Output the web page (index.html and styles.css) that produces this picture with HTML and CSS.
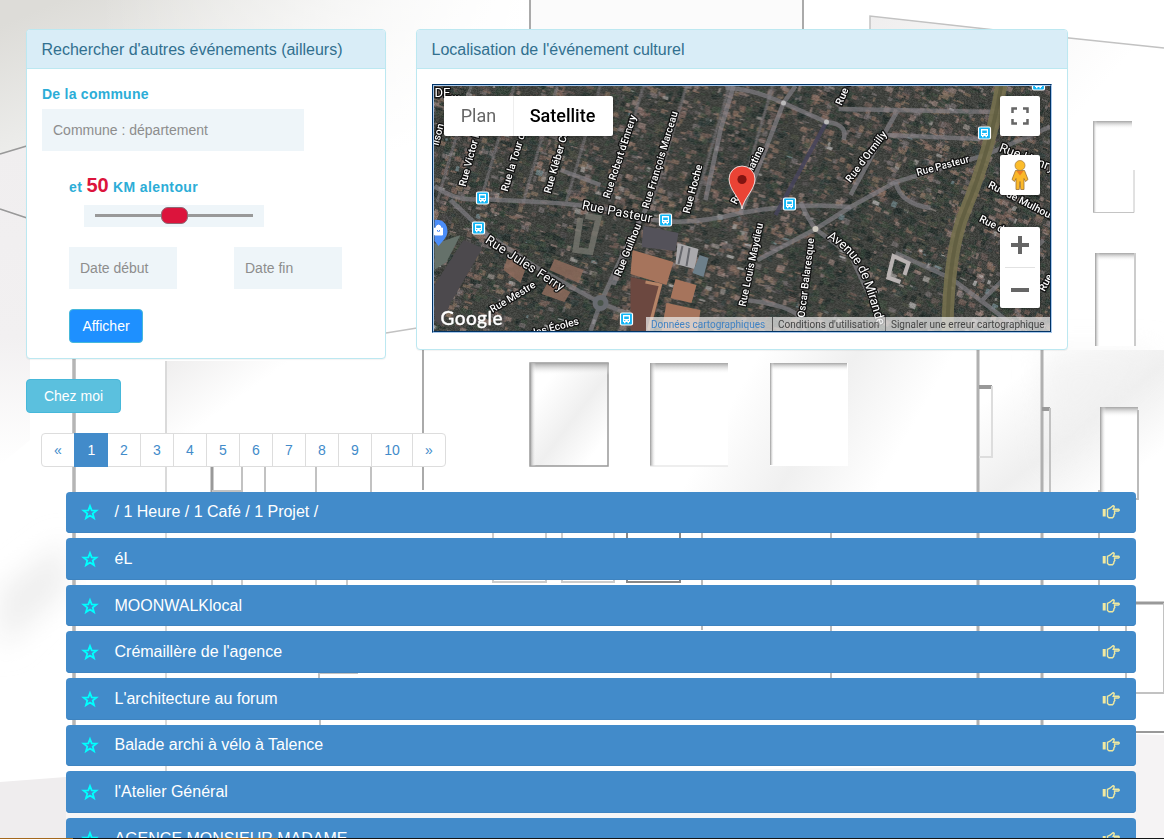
FILE: index.html
```html
<!DOCTYPE html>
<html lang="fr">
<head>
<meta charset="utf-8">
<title>Événements culturels</title>
<link rel="stylesheet" href="styles.css">
</head>
<body>
<svg class="backdrop" viewBox="0 0 1164 839" aria-hidden="true">
  <defs>
    <linearGradient id="corner" gradientUnits="userSpaceOnUse" x1="60" y1="0" x2="200" y2="330"><stop offset="0" stop-color="#dddcd8"/><stop offset=".3" stop-color="#ebebe9"/><stop offset=".75" stop-color="#fff"/></linearGradient>
    <linearGradient id="topFade" gradientUnits="userSpaceOnUse" x1="100" y1="0" x2="530" y2="0"><stop offset="0" stop-color="#fff" stop-opacity="0"/><stop offset="1" stop-color="#fff"/></linearGradient>
    <linearGradient id="sheen" x1="0" y1="0" x2="1" y2="1"><stop offset="0" stop-color="#efeeee"/><stop offset=".5" stop-color="#fff"/></linearGradient>
    <linearGradient id="band" x1="0" y1="0" x2="1" y2="1"><stop offset=".2" stop-color="#fff"/><stop offset=".55" stop-color="#efefef"/><stop offset=".85" stop-color="#fff"/></linearGradient>
    <linearGradient id="wide" gradientUnits="userSpaceOnUse" x1="750" y1="370" x2="960" y2="490"><stop offset="0" stop-color="#fff"/><stop offset=".35" stop-color="#f0f0f0"/><stop offset=".7" stop-color="#fff"/></linearGradient>
    <linearGradient id="sideFade" x1="0" y1="0" x2="0" y2="1"><stop offset="0" stop-color="#f0eeef"/><stop offset=".6" stop-color="#f2f0f1"/><stop offset="1" stop-color="#fff"/></linearGradient>
    <linearGradient id="topShade" x1="0" y1="0" x2="0" y2="1"><stop offset="0" stop-color="#a5a5a5"/><stop offset="1" stop-color="#fff" stop-opacity="0"/></linearGradient>
    <linearGradient id="leftShade"><stop offset="0" stop-color="#999"/><stop offset="1" stop-color="#fff" stop-opacity="0"/></linearGradient>
    <filter id="soft"><feGaussianBlur stdDeviation=".6"/></filter>
    <filter id="haze" x="-30%" y="-30%" width="160%" height="160%"><feGaussianBlur stdDeviation="14"/></filter>
  </defs>
  <rect width="1164" height="839" fill="#fff"/>
  <path d="M0 0H530V160H30L0 154Z" fill="url(#corner)"/>
  <path d="M0 0H530V160H0Z" fill="url(#topFade)"/>
  <path d="M0 154L30 145V440L0 465Z" fill="url(#sideFade)"/>
  <path d="M530 0H803V30H530Z" fill="#fbfbfb"/>
  <path d="M870 16L1164 48V350H1060V30H870Z" fill="url(#sheen)"/>
  <path d="M167 361H290Q250 400 215 425Q190 445 167 450Z" fill="url(#sheen)"/>
  <rect x="640" y="350" width="338" height="142" fill="url(#wide)"/>
  <rect x="978" y="350" width="186" height="142" fill="url(#band)"/>
  <path d="M1040 350L1164 350V345L1050 470Z" fill="#f1f1f1" filter="url(#haze)" opacity=".6"/>
  <path d="M0 782L66 777V839H0Z" fill="#efedee"/>
  <path d="M0 590Q40 560 66 540V590L0 650Z" fill="#efefef" filter="url(#haze)"/>
  <path d="M1130 734L1164 735V839H1130Z" fill="#f5f3f4"/>
  <path d="M66 777L1136 765V839H66Z" fill="#f7f6f6"/>
  <g fill="none" stroke="#c2c2c2" stroke-width="2" filter="url(#soft)">
    <path d="M0 154L30 145M0 209L30 219" stroke="#999" stroke-width="1.5"/>
    <path d="M530 0V30M803 0V30" stroke="#aaa"/>
    <path d="M870 30V16L1050 36L1164 48M386 333L417 328" stroke-width="1.5"/>
    <path d="M74 359V765" stroke="#b5b5b5" stroke-width="3.5"/>
    <path d="M166 361V780" stroke="#dadada"/>
    <path d="M423 350V490" stroke="#aaa"/>
    <path d="M212 467V492" stroke="#999" stroke-width="3"/>
    <path d="M242 467V491H212M265 467V492M316 467V492M371 467V492"/>
    <path d="M212 540V588H242V540M316 540V586H347V540M493 530V582H546V530M562 530V582H614V530" stroke="#ccc"/>
    <path d="M627 530V582H680V530" stroke="#888"/>
    <path d="M702 530V630M831 530V680" stroke="#bbb"/>
    <path d="M978 350V725M1042 350V725" stroke="#b0b0b0" stroke-width="3"/>
    <path d="M1099 490V640" stroke="#bbb"/>
    <path d="M979 387H992" stroke="#999" stroke-width="4"/><path d="M992 386V457H979" stroke="#ddd"/>
    <path d="M1042 409H1050" stroke="#999" stroke-width="4"/><path d="M1050 408V500"/>
    <path d="M1136 603H1164" stroke="#999" stroke-width="3"/><path d="M1136 693H1164M1126 600V690M1164 603V693"/>
    <path d="M1136 732H1164" stroke="#999"/>
    <path d="M319 720V673H358M320 720V765"/>
  </g>
  <g class="windows">
    <g><rect x="530" y="363" width="78" height="103" fill="url(#band)" stroke="#999" stroke-width="1.5"/><rect x="530" y="363" width="79" height="12" fill="url(#topShade)"/><rect x="530" y="363" width="6" height="103" fill="url(#leftShade)"/></g>
    <g><rect x="650" y="363" width="78" height="103" fill="#fff"/><rect x="650" y="363" width="78" height="11" fill="url(#topShade)"/><rect x="650" y="363" width="6" height="103" fill="url(#leftShade)"/><path d="M650 466H728" stroke="#ddd"/></g>
    <g><rect x="770" y="363" width="78" height="103" fill="#fff"/><rect x="770" y="363" width="77" height="8" fill="url(#topShade)"/><rect x="770" y="363" width="4" height="102" fill="url(#leftShade)"/></g>
    <g><rect x="1093" y="121" width="40" height="91" fill="#fff"/><rect x="1094" y="121" width="38" height="8" fill="url(#topShade)"/><rect x="1093" y="121" width="4" height="91" fill="url(#leftShade)"/><path d="M1093 212.500H1134V170" fill="none" stroke="#c4c4c4"/></g>
    <g><rect x="1095" y="253" width="40" height="93" fill="#fff"/><rect x="1095" y="253" width="40" height="8" fill="url(#topShade)"/><rect x="1095" y="253" width="5" height="93" fill="url(#leftShade)"/><path d="M1135 253V346" stroke="#ccc" stroke-width="2"/></g>
    <g><rect x="1100" y="407" width="38" height="92" fill="#fff"/><rect x="1100" y="407" width="38" height="10" fill="url(#topShade)"/><rect x="1100" y="407" width="6" height="92" fill="url(#leftShade)"/><path d="M1138 410V499H1100" fill="none" stroke="#bbb" stroke-width="2"/></g>
  </g>
</svg>

<main class="page">
  <div class="top">
    <section class="panel search">
      <h3 class="panel-title">Rechercher d'autres événements (ailleurs)</h3>
      <form class="panel-body">
        <label class="lbl">De la commune</label>
        <input class="field town" placeholder="Commune : département">
        <div class="radius">
          <div class="lbl distance">et <span class="km">50</span> KM alentour</div>
          <div class="slider"><span class="track"><span class="thumb"></span></span></div>
          <div class="dates">
            <input class="field date" placeholder="Date début">
            <input class="field date" placeholder="Date fin">
          </div>
          <button class="btn show" type="button">Afficher</button>
        </div>
      </form>
    </section>

    <section class="panel place">
      <h3 class="panel-title">Localisation de l'événement culturel</h3>
      <div class="panel-body">
        <div class="map"><div class="map-in">
          <canvas id="ground" width="615" height="245"></canvas>
          <svg class="map-svg" viewBox="434 86 615 245">
            <defs>
              <g id="bus"><rect x="-6" y="-6" width="12" height="12" rx="1.500" fill="#12b5f5" stroke="#fff" stroke-width="1.200"/><path d="M-3.500-4h7v7h-1v1.200h-1.500V3h-2v1.200h-1.500V3h-1z" fill="#fff"/><path d="M-2.300-2.500h4.600v2.500h-4.600zM-2.300 1h1v1h-1zM1.300 1h1v1h-1z" fill="#12b5f5"/></g>
            </defs>
            <g class="roads">
              <path d="M434 186Q455 202 480 199L520 201Q600 204 640 217Q680 228 740 213Q800 202 850 207L895 182L985 155L1049 127"/>
              <path d="M450 200L486 234L540 270L600 303L665 328M600 303L590 331M600 303L622 255L650 200"/>
              <path d="M740 213L757 170L783 103L795 86M725 88Q750 88 783 103L826 122Q848 124 843 140M757 260L815 229L850 207M800 202Q808 220 815 229L850 255L880 320"/>
              <path d="M838 109L1000 112M898 109L880 140L850 195M885 135L980 139M895 182Q900 204 930 208M895 253L950 278L981 301L1043 240M981 301L1020 331M745 300Q790 305 800 318"/>
              <path d="M560 170L600 185M640 217L613 285M705 200L720 130L733 86" stroke-width="3"/>
            </g>
            <path d="M826 122L775 215" stroke="#46445b" stroke-width="4" opacity=".85"/>
            <path d="M1001 84Q990 150 965 210Q948 250 947 331" fill="none" stroke="#77714f" stroke-width="12" opacity=".9"/>
            <path d="M1001 84Q990 150 965 210Q948 250 947 331" fill="none" stroke="#5f5d40" stroke-width="4" opacity=".8"/>
            <path d="M434 244L460 235L446 262L434 270Z" fill="#65716a"/>
            <path d="M463 240L482 248L450 303L441 326L434 320V285Z" fill="#4c494d"/>
            <path d="M643 226L678 233L675 251L641 247Z" fill="#54525a"/>
            <path d="M632 250L673 262L666 285L630 274ZM675 279L696 285L691 303L670 298ZM666 303L700 310L697 331H661Z" fill="#a6745c"/>
            <path d="M677 243L698 249L694 269L675 264Z" fill="#aaa9ac"/><path d="M682 246L678 264M689 248L686 266" stroke="#66676c" stroke-width="2"/>
            <path d="M630 277L662 284L650 331H630Z" fill="#6c4840"/><path d="M645 282L660 285L648 330" fill="none" stroke="#b58467" stroke-width="3"/>
            <path d="M699 255L708 258L703 277L692 273Z" fill="#6d7f8a"/>
            <path d="M888 276L893 256L908 263L904 275M886 277L900 282" fill="none" stroke="#b9b3b2" stroke-width="4"/>
            <path d="M580 218L575 250L590 252L598 218L585 216" fill="none" stroke="#77776f" stroke-width="6" opacity=".8"/>
            <path d="M554 259L583 270L578 283L549 270ZM548 281L570 292L564 302L541 294ZM507 257L526 266L520 283L503 270Z" fill="#8d6b5c" opacity=".85"/>
            <circle cx="600" cy="303" r="8" fill="#686b70"/><circle cx="600" cy="303" r="3" fill="#49544a"/>
            <circle cx="815" cy="229" r="3" fill="#ccc8bd"/><circle cx="783" cy="103" r="2.500" fill="#bbb"/><circle cx="826" cy="122" r="2.500" fill="#bbb"/>

            <g class="names">
              <text class="big thin" x="434" y="97">DE...</text>
              <text transform="translate(438 146) rotate(-76)">ilson</text>
              <text transform="translate(465 187) rotate(-75)">Rue Victor Hugo</text>
              <text transform="translate(507 192) rotate(-73)">Rue la Tour d'Auv.</text>
              <text transform="translate(550 194) rotate(-74)">Rue Kléber Castaing</text>
              <text transform="translate(609 199) rotate(-72)" textLength="87">Rue Robert d'Ennery</text>
              <text transform="translate(648 209) rotate(-73)" textLength="101">Rue François Marceau</text>
              <text transform="translate(689 214) rotate(-75)">Rue Hoche</text>
              <text transform="translate(736 205) rotate(-64)">Rue Lamatina</text>
              <text transform="translate(841 106) rotate(-66)">Rue Gal</text>
              <text transform="translate(850 183) rotate(-53)" textLength="61">Rue d'Ormilly</text>
              <text transform="translate(917 176) rotate(-15)" textLength="54">Rue Pasteur</text>
              <text class="big" transform="translate(998 151) rotate(21)">Rue Henry</text>
              <text transform="translate(987 187) rotate(27)">Rue de Mulhouse</text>
              <text transform="translate(978 221) rotate(27)">Rue de</text>
              <text transform="translate(1044 292) rotate(-62)">Rue</text>
              <text class="big" transform="translate(581 209) rotate(11)" textLength="71">Rue Pasteur</text>
              <text class="big" transform="translate(484 242) rotate(33)" textLength="91">Rue Jules Ferry</text>
              <text transform="translate(492 313) rotate(-31)" textLength="51">Rue Mestre</text>
              <text transform="translate(531 337) rotate(-15)">des Écoles</text>
              <text transform="translate(620 277) rotate(-68)">Rue Guilhou</text>
              <text transform="translate(745 307) rotate(-78)" textLength="85">Rue Louis Maydieu</text>
              <text transform="translate(804 318) rotate(-83)" textLength="80">Oscar Balaresque</text>
              <path id="avenue" d="M826 238Q851 252 861 276Q869 297 879 334" fill="none"/>
              <text class="big"><textPath href="#avenue" textLength="105">Avenue de Mirande</textPath></text>
            </g>
            <use href="#bus" x="482" y="198"/><use href="#bus" x="478" y="228"/><use href="#bus" x="665" y="220"/><use href="#bus" x="789" y="204"/><use href="#bus" x="984" y="133"/><use href="#bus" x="1038" y="84"/><use href="#bus" x="626" y="319"/>
            <path d="M434 220c8-1 13 4 13 11 0 6-4 9-9 15l-4-5z" fill="#4b8df8"/><path d="M434 228h8v7h-8zM436 228v-2q2-2 4 0v2" fill="#fff" stroke="#fff"/><path d="M437 230v1q1 2 2 0v-1" fill="none" stroke="#4b8df8"/>
            <path d="M741.500 209C740 198 728.500 190 728.500 179a13 13 0 0 1 26 0C754.500 190 743 198 741.500 209Z" fill="#ea4335" stroke="#fff" stroke-width=".8"/><circle cx="741.500" cy="179.500" r="4.600" fill="#811411"/>
            <text class="logo" x="440" y="325" textLength="62">Google</text>
          </svg>
          <div class="types"><span>Plan</span><span class="on">Satellite</span></div>
          <div class="tools">
            <div class="tool"><svg width="18" height="18" viewBox="0 0 18 18"><path d="M1.500 6V1.500H6M12 1.500h4.500V6M16.500 12v4.500H12M6 16.500H1.500V12" fill="none" stroke="#666" stroke-width="2.500"/></svg></div>
            <div class="tool peg"><svg width="20" height="32" viewBox="0 0 20 32"><path d="M5.500 11.500h9l3.500 9-2.500 2-1.500-3V30.500H10.800l-.8-8-.8 8H6V19.500l-1.500 3-2.500-2z" fill="#fbb829" stroke="#9c7136" stroke-width=".8"/><path d="M6.500 12h7L10 16.500z" fill="#ef7f22"/><circle cx="10" cy="6.500" r="5" fill="#fbbc2b" stroke="#a2783c" stroke-width=".7"/></svg></div>
            <div class="tool zoomer"><svg width="40" height="81" viewBox="0 0 40 81"><path d="M11 18h18M20 9v18M11 63h18" stroke="#666" stroke-width="4"/><path d="M5 40.500h30" stroke="#e2e2e2"/></svg></div>
          </div>
          <div class="credits"><span class="data">Données cartographiques</span><span class="terms">Conditions d'utilisation</span><span class="report">Signaler une erreur cartographique</span></div>
        </div></div>
      </div>
    </section>
  </div>

  <button class="btn home" type="button">Chez moi</button>

  <nav class="pages"><a>«</a><a class="on">1</a><a>2</a><a>3</a><a>4</a><a>5</a><a>6</a><a>7</a><a>8</a><a>9</a><a class="wide">10</a><a>»</a></nav>

  <svg width="0" height="0" class="defs"><defs>
    <symbol id="star" viewBox="0 0 18 18"><path d="M9 3L10.700 7.400L15.400 7.600L11.700 10.500L13 15.100L9 12.500L5 15.100L6.300 10.500L2.600 7.600L7.300 7.400Z" fill="none" stroke="#0ff" stroke-width="1.800"/></symbol>
    <symbol id="hand" viewBox="0 0 18 14"><path d="M.7 4h3v7.500h-3z" fill="#f0e9a0"/><path d="M5.500 4.300L8 3.200L11 .8Q12.800 1 12 2.500L11.200 4.200H16.500Q18 5.200 16.500 6H12.500V7.500L12.800 8.500L12 9.500L11.700 11.500L10.500 12.800H7L5.500 11.500Z" fill="none" stroke="#f0e9a0" stroke-width="1.400"/></symbol>
  </defs></svg>
  <ul class="events">
    <li><svg class="star"><use href="#star"/></svg><span>/ 1 Heure / 1 Café / 1 Projet /</span><svg class="hand"><use href="#hand"/></svg></li>
    <li><svg class="star"><use href="#star"/></svg><span>éL</span><svg class="hand"><use href="#hand"/></svg></li>
    <li><svg class="star"><use href="#star"/></svg><span>MOONWALKlocal</span><svg class="hand"><use href="#hand"/></svg></li>
    <li><svg class="star"><use href="#star"/></svg><span>Crémaillère de l'agence</span><svg class="hand"><use href="#hand"/></svg></li>
    <li><svg class="star"><use href="#star"/></svg><span>L'architecture au forum</span><svg class="hand"><use href="#hand"/></svg></li>
    <li><svg class="star"><use href="#star"/></svg><span>Balade archi à vélo à Talence</span><svg class="hand"><use href="#hand"/></svg></li>
    <li><svg class="star"><use href="#star"/></svg><span>l'Atelier Général</span><svg class="hand"><use href="#hand"/></svg></li>
    <li><svg class="star"><use href="#star"/></svg><span>AGENCE MONSIEUR MADAME</span><svg class="hand"><use href="#hand"/></svg></li>
  </ul>
</main>
<div class="edge"></div>
<script src="ground.js"></script>
</body>
</html>
```
FILE: styles.css
```css
* { box-sizing: border-box; }
body {
  margin: 0;
  height: 839px;
  overflow: hidden;
  position: relative;
  background: #fff;
  font: 14px/20px "Liberation Sans", Arial, sans-serif;
  color: #333;
}
.backdrop { position: absolute; left: 0; top: 0; width: 1164px; height: 839px; z-index: -1; }
.page { padding: 29px 28px 0 26px; }
.top { display: flex; align-items: flex-start; gap: 30px; }
.panel { background: #fff; border: 1px solid #bce8f1; border-radius: 4px; box-shadow: 0 1px 1px rgba(0,0,0,.05); }
.search { width: 360px; height: 330px; }
.place { width: 652px; height: 321px; flex: none; }
.panel-title {
  margin: 0;
  height: 39px;
  padding: 11px 14.5px 0;
  font-size: 16px;
  font-weight: 400;
  line-height: 18px;
  color: #31708f;
  background: #d9edf7;
  border-bottom: 1px solid #bce8f1;
  border-radius: 3px 3px 0 0;
}
.panel-body { padding: 15px; }
.lbl { display: block; font-weight: 700; letter-spacing: .25px; color: #2cadd7; height: 25px; }
.field {
  display: block;
  height: 42px;
  border: 0;
  padding: 0 11px;
  background: #eef5f9;
  font: inherit;
}
.field::placeholder { color: #8d8d8d; opacity: 1; }
.town { width: 262px; }
.radius { padding: 21px 0 0 27px; }
.distance { height: 33px; line-height: 26px; letter-spacing: .38px; }
.km { font-size: 20px; letter-spacing: 0; color: #dc143c; }
.slider { width: 180px; height: 22px; margin-left: 15px; background: #eef5f9; display: flex; align-items: flex-start; justify-content: center; padding-top: 9px; }
.track { width: 158px; height: 3px; background: #999; display: flex; align-items: center; justify-content: center; }
.thumb { width: 27px; height: 17px; flex: none; background: #dc143c; border: 1px solid #8e6974; border-radius: 7px; }
.dates { display: flex; gap: 57px; margin: 20px 0; }
.date { width: 108px; }
.btn { display: block; height: 34px; border-radius: 4px; border: 1px solid #46b8da; color: #fff; font: inherit; padding: 0; }
.show { width: 74px; background: #1e90ff; }
.home { width: 95px; background: #5bc0de; margin: 20px 0; }

.map { width: 620px; height: 249px; border: 1px solid; border-color: #003366 #a9c9ec #a9c9ec #003366; }
.map-in { position: relative; height: 100%; overflow: hidden; border: 1px solid; border-color: #a9c9ec #003366 #003366 #a9c9ec; background: #49483f; }
.map canvas, .map-svg { position: absolute; left: 0; top: 0; width: 616px; height: 245px; }
.roads path { fill: none; stroke: #858388; stroke-width: 4.5; opacity: .65; }
.names text { font: 500 10.3px Roboto, sans-serif; fill: #fff; stroke: #111; stroke-width: 2.6px; stroke-linejoin: round; paint-order: stroke; }
.names .big { font-size: 12.8px; font-weight: 400; }
.names .thin { font-size: 13px; }
.logo { font: 500 19px Lato, sans-serif; fill: #fff; stroke: #fff; stroke-width: .3px; }
.types { position: absolute; left: 10px; top: 10px; height: 40px; display: flex; background: #fff; border-radius: 2px; font: 18px/40px Roboto, sans-serif; color: #666; box-shadow: 0 1px 3px rgba(0,0,0,.3); }
.types span { width: 69px; text-align: center; }
.types .on { width: 100px; color: #000; font-weight: 500; border-left: 1px solid #eee; padding-right: 2px; }
.tools { position: absolute; right: 10px; top: 10px; width: 40px; }
.tool { height: 40px; background: #fff; border-radius: 2px; display: flex; align-items: center; justify-content: center; box-shadow: 0 1px 3px rgba(0,0,0,.3); }
.peg { margin: 19px 0 32px; }
.zoomer { height: 81px; }
.credits { position: absolute; right: 0; bottom: 0; height: 14px; display: flex; background: rgba(235,235,235,.72); font: 10px/15px Roboto, sans-serif; color: #444; white-space: nowrap; }
.credits span { padding-left: 5px; }
.data { width: 126px; color: #4183c4; }
.terms { width: 113px; border-left: 1px solid #555; }
.report { width: 165px; border-left: 1px solid #777; }

.pages { display: flex; margin-left: 15px; width: 405px; height: 34px; border: 1px solid #ddd; border-radius: 4px; background: #fff; }
.pages a { width: 33px; line-height: 32px; text-align: center; color: #428bca; border-left: 1px solid #ddd; }
.pages a:first-child { width: 32px; border: 0; }
.pages .on { width: 34px; margin: -1px -1px -1px 0; line-height: 34px; color: #fff; background: #428bca; border-color: #428bca; z-index: 1; }
.pages .wide { width: 41px; }
.defs { position: absolute; }
.events { list-style: none; margin: 24.7px 0 0 40px; padding: 0; width: 1070px; }
.events li {
  display: flex;
  align-items: center;
  height: 41.6px;
  margin-bottom: 5px;
  padding: 0 16px 0 15px;
  border-radius: 4px;
  background: #428bca;
  box-shadow: inset 0 -1px 0 #3f84c0;
  color: #fff;
  font-size: 16px;
}
.star { width: 18px; height: 18px; margin-right: 15.5px; flex: none; }
.hand { width: 18px; height: 14px; margin-left: auto; flex: none; }
.edge { position: absolute; left: 0; bottom: 0; width: 1164px; height: 1px; background: linear-gradient(90deg, #a4681c 73px, #151515 73px 217px, #a4681c 217px 278px, #151515 278px); }
```
FILE: ground.js
```js
// Paints the aerial ground texture: slanted rows of roofs, gardens and lanes.
const ctx = document.getElementById('ground').getContext('2d');
let seed = 4711;
const rnd = () => (seed = (seed * 16807) % 2147483647) / 2147483647;
const pick = list => list[Math.floor(rnd() * list.length)];
const greens = ['#2b3733', '#35443a', '#232e2c', '#414f42', '#33403e', '#4b4f43'];
const roofs = ['#79635b', '#8a6f62', '#665956', '#95807a', '#777072', '#524e50', '#84705f'];
const lights = ['#aaa5a2', '#c0bebe', '#738a90', '#9b938e'];

ctx.fillStyle = '#41433f';
ctx.fillRect(0, 0, 615, 245);
for (let i = 0; i < 6500; i++) {
  const x = rnd() * 635 - 10;
  const y = rnd() * 260 - 8;
  const phase = (((x + y * 0.3) % 43) + 43) % 43;
  const builtUp = phase < 13 || phase > 34;
  // Wooded blocks south-west and south-east of the main street
  const wooded = (x > 80 && x < 170 && y > 140) || (x > 370 && x < 510 && y > 120);
  const share = wooded ? 0.2 : builtUp ? 0.75 : 0.3;
  const roll = rnd();
  ctx.save();
  ctx.translate(x, y);
  ctx.rotate(x > 380 ? 0.4 : 0.28);
  ctx.globalAlpha = 0.7;
  ctx.fillStyle = roll > 0.975 ? pick(lights) : roll < share ? pick(roofs) : pick(greens);
  ctx.fillRect(0, 0, 2 + rnd() * 6, 1 + rnd() * 5);
  ctx.restore();
}
ctx.strokeStyle = 'rgba(112,110,112,.7)';
ctx.lineWidth = 3;
for (let x = 3; x < 340; x += 43) {
  ctx.beginPath();
  ctx.moveTo(x + 34, 0);
  ctx.lineTo(x, 116);
  ctx.stroke();
}
const img = ctx.getImageData(0, 0, 615, 245);
for (let i = 0; i < img.data.length; i += 4) {
  const n = (rnd() - 0.5) * 26;
  for (let c = 0; c < 3; c++) img.data[i + c] += n;
}
ctx.putImageData(img, 0, 0);
```
